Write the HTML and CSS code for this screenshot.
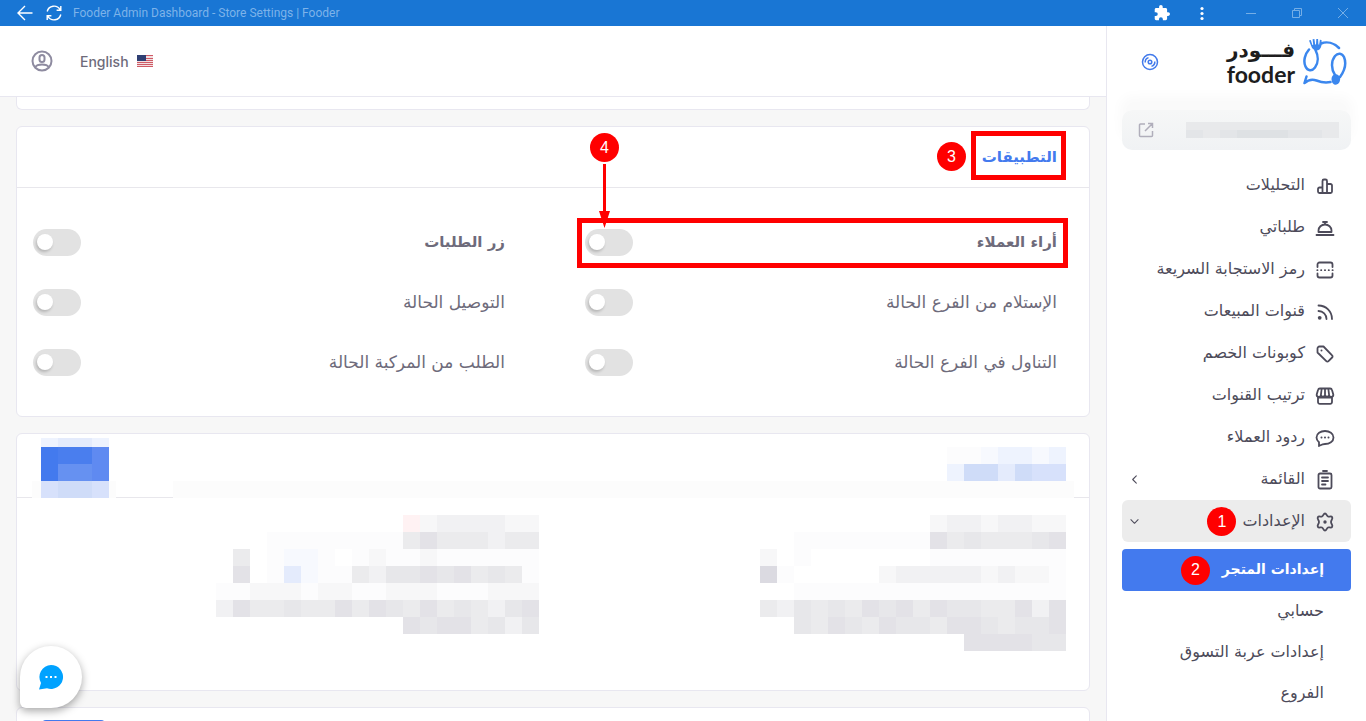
FILE: index.html
```html
<!DOCTYPE html>
<html lang="ar" dir="rtl">
<head>
<meta charset="UTF-8" />
<meta name="viewport" content="width=device-width, initial-scale=1" />
<title>Fooder Admin Dashboard - Store Settings | Fooder</title>
<link rel="stylesheet" href="styles.css">
</head>
<body>

<header class="titlebar" dir="ltr">
  <button class="win-btn" aria-label="Back">
    <svg width="16" height="16" viewBox="0 0 16 16"><path d="M15.500 8H1M8 1 1 8l7 7" /></svg>
  </button>
  <button class="win-btn" aria-label="Reload">
    <svg width="16" height="16" viewBox="0 0 16 16"><path d="M1.200 6.500A7 7 0 0 1 14 4.500M14.800 1v4.200h-4.200M14.800 9.500A7 7 0 0 1 2 11.500M1.200 15v-4.200h4.200" /></svg>
  </button>
  <span class="win-title">Fooder Admin Dashboard - Store Settings | Fooder</span>
  <div class="win-controls">
    <button class="win-btn" aria-label="Extensions">
      <svg width="16" height="16" viewBox="1 1 22 22"><path class="solid" d="M20.500 11H19V7c0-1.100-.9-2-2-2h-4V3.500a2.500 2.500 0 0 0-5 0V5H4c-1.100 0-2 .9-2 2v3.800h1.500a2.700 2.700 0 0 1 0 5.400H2V20c0 1.100.9 2 2 2h3.800v-1.500a2.700 2.700 0 0 1 5.400 0V22H17c1.100 0 2-.9 2-2v-4h1.500a2.500 2.500 0 0 0 0-5z" /></svg>
    </button>
    <button class="win-btn" aria-label="Menu">
      <svg width="16" height="16" viewBox="0 0 16 16"><circle class="solid" cx="8" cy="3.500" r="1.600" /><circle class="solid" cx="8" cy="8.500" r="1.600" /><circle class="solid" cx="8" cy="13.500" r="1.600" /></svg>
    </button>
    <button class="win-btn faint" aria-label="Minimize">
      <svg width="12" height="12" viewBox="0 0 12 12"><path d="M1 6.500h10" /></svg>
    </button>
    <button class="win-btn faint" aria-label="Restore">
      <svg width="12" height="12" viewBox="0 0 12 12"><path d="M1.500 3.500h7v7h-7zM3.500 3.500v-2h7v7h-2" /></svg>
    </button>
    <button class="win-btn faint" aria-label="Close">
      <svg width="12" height="12" viewBox="0 0 12 12"><path d="m1 1 10 10M11 1 1 11" /></svg>
    </button>
  </div>
</header>

<div class="app">

  <aside class="sidebar">
    <div class="brand">
      <svg class="brand-mark" width="46" height="48" viewBox="0 0 46 48">
        <path d="M19 5.500c6-2.500 13-.5 18 4.500M13.500 12c3 6 3 13-.5 17.500-3 4-7.500 3.500-9.500-1C1 23 3 16 7 11.500M33 37c-4-6-4-14 0-19 3-3.500 7-3 9 1 2.500 6 1 13-4 20M4.500 38.500 2.500 45c4-3.500 8-4 12-2.500 5 2 9 2.500 14 1.500" />
        <path class="fill" d="m7 2.500 1.800-.5 1.600 5 .8-.2L10.600 1.200l1.800-.2.8 5.600h.8l.3-5.600 1.800.1.300 5.400.8-.1.700-4.600 1.600.3c.5 4.500 0 7.500-2 9.400-3 2.500-7 .5-8.300-3.500zM29.500 41c0-3.500 3-5.500 5.500-4.500 3 1 4 4.500 2.500 7.500s-5 3.500-6.500 1.500c-1-1-1.500-2.700-1.500-4.500z" />
      </svg>
      <div class="brand-name">
        <span class="brand-ar">فـــودر</span>
        <span class="brand-en">fooder</span>
      </div>
      <button class="icon-btn" aria-label="تثبيت القائمة">
        <svg class="disc" width="18" height="18" viewBox="0 0 18 18"><circle cx="9" cy="9" r="7.500" /><circle cx="9" cy="9" r="1.800" /><path d="M4.200 9.500A4.800 4.800 0 0 1 7.500 4.600M13.800 8.500a4.800 4.800 0 0 1-3.300 4.900" /></svg>
      </button>
    </div>

    <div class="store-link">
      <svg class="mosaic" data-mosaic="store" aria-hidden="true"></svg>
      <svg class="external" width="16" height="16" viewBox="0 0 16 16"><path d="M7 2H2.500a1 1 0 0 0-1 1v10.500a1 1 0 0 0 1 1h11a1 1 0 0 0 1-1V9M10 1.500h4.500V6M14.500 1.500 7 9" /></svg>
    </div>

    <nav class="menu">
      <a href="#"><svg viewBox="0 0 20 20"><path d="M7.500 17V5A1.500 1.500 0 0 1 9 3.500h1.500A1.500 1.500 0 0 1 12 5v12M7.500 11.500h-3A1.500 1.500 0 0 0 3 13v2.500A1.500 1.500 0 0 0 4.500 17h11a1.500 1.500 0 0 0 1.500-1.500V9.500A1.500 1.500 0 0 0 15.500 8H12" /></svg><span>التحليلات</span></a>
      <a href="#"><svg viewBox="0 0 20 20"><path d="M3.500 14v-1.500a6.500 6 0 0 1 13 0V14zM1.500 17h17M10 6.500V4M8 4h4" /></svg><span>طلباتي</span></a>
      <a href="#"><svg viewBox="0 0 20 20"><path d="M2.500 7V4.500a2 2 0 0 1 2-2h11a2 2 0 0 1 2 2V7M2.500 13.500v2a2 2 0 0 0 2 2h11a2 2 0 0 0 2-2v-2M2.300 10.200h.2M6.100 10.200h.2M9.900 10.200h.2M13.700 10.200h.2M17.500 10.200h.2" /></svg><span>رمز الاستجابة السريعة</span></a>
      <a href="#"><svg viewBox="0 0 20 20"><path d="M3.500 3.500c7.500 0 13.500 6 13.500 13.500M3.500 9c4.500 0 8 3.500 8 8" /><circle class="dot" cx="4.700" cy="15.800" r="1.900" /></svg><span>قنوات المبيعات</span></a>
      <a href="#"><svg viewBox="0 0 20 20"><path d="M2.500 4.500v4l8.800 8.600a1.500 1.500 0 0 0 2.200 0l3.600-3.600a1.500 1.500 0 0 0 0-2.200L8.500 2.500h-4a2 2 0 0 0-2 2z" /><circle class="dot" cx="6.500" cy="6.500" r="1" /></svg><span>كوبونات الخصم</span></a>
      <a href="#"><svg viewBox="0 0 20 20"><path d="M5 2.500h10a2 2 0 0 1 2 1.500l1.300 4.500a2.100 2.100 0 0 1-4.200.5 2.100 2.100 0 0 1-4.100 0 2.100 2.100 0 0 1-4.100 0 2.100 2.100 0 0 1-4.200-.5L3 4a2 2 0 0 1 2-1.500zM6.700 2.500 5.900 9M13.300 2.500l.8 6.500M10 2.500V9M3 11.500v4.500a1.800 1.800 0 0 0 1.800 1.800h10.400A1.800 1.800 0 0 0 17 16v-4.500M3 11.500h14" /></svg><span>ترتيب القنوات</span></a>
      <a href="#"><svg viewBox="0 0 20 20"><path d="M4 18v-3.700C2.500 13 1.500 11.500 1.500 9.500c0-4 4-6.500 8.500-6.500s8.500 2.500 8.500 6.500-4 6.500-8.500 6.500c-2.500 0-4 1-6 2z" /><path d="M6.400 9.500h.2M9.900 9.500h.2M13.400 9.500h.2" /></svg><span>ردود العملاء</span></a>
      <a href="#"><svg viewBox="0 0 20 20"><rect x="3.500" y="3.500" width="13" height="15" rx="1.500" /><path d="M8 1h4M7 7.500h6M7 11h6M7 14.500h3.500" /></svg><span>القائمة</span><svg class="chevron" viewBox="0 0 10 10"><path d="M7 1 3 5l4 4" /></svg></a>
      <a href="#" class="open"><svg viewBox="0 0 20 20"><path d="M10 1.500c1.600 0 1.500 2.300 3 3 1.500.6 3.200-1 4.200.8.900 1.600-1.200 2.700-1.200 4.700s2.100 3.100 1.200 4.700c-1 1.800-2.700.2-4.200.8-1.500.7-1.400 3-3 3s-1.500-2.300-3-3c-1.500-.6-3.200 1-4.200-.8C1.900 13.100 4 12 4 10S1.900 6.900 2.800 5.300c1-1.800 2.700-.2 4.200-.8 1.500-.7 1.400-3 3-3z" /><circle class="dot" cx="10" cy="10" r="1.700" /></svg><span>الإعدادات</span><b class="step">1</b><svg class="chevron" viewBox="0 0 10 10"><path d="m1 3 4 4 4-4" /></svg></a>
    </nav>
    <nav class="submenu">
      <a href="#" class="active"><span>إعدادات المتجر</span><b class="step">2</b></a>
      <a href="#"><span>حسابي</span></a>
      <a href="#"><span>إعدادات عربة التسوق</span></a>
      <a href="#"><span>الفروع</span></a>
    </nav>
  </aside>

  <main class="main">
    <div class="topbar" dir="ltr">
      <button class="icon-btn" aria-label="Account">
        <svg class="user" width="22" height="22" viewBox="0 0 22 22"><circle cx="11" cy="11" r="9.500" /><rect x="8.500" y="5" width="5" height="7" rx="2.500" /><path d="M4.500 17c1-2 3.500-2.500 6.500-2.500s5.500.5 6.500 2.500" /></svg>
      </button>
      <a href="#" class="lang">English
        <svg width="16" height="12" viewBox="0 0 16 12"><path fill="#f3dfe1" d="M0 0h16v12H0z" /><path stroke="#cf5b66" d="M0 .5h16M0 3.500h16M0 5.500h16M0 7.500h16M0 9.500h16M0 11.500h16" /><path fill="#2f3f73" d="M0 0h9v6H0z" /></svg>
      </a>
    </div>

    <div class="content">
      <section class="card card-tail"></section>

      <section class="card">
        <div class="card-head">
          <h2>التطبيقات</h2>
        </div>
        <div class="switches">
          <div class="switch-row strong marked">
            <label for="reviews">أراء العملاء</label>
            <input type="checkbox" id="reviews" class="switch" />
            <div class="pointer"><b class="step">4</b><svg width="11" height="66" viewBox="0 0 11 66"><path d="M4 2h3v47h4L5.500 66 0 49h4z" /></svg></div>
          </div>
          <div class="switch-row strong">
            <label for="orderButton">زر الطلبات</label>
            <input type="checkbox" id="orderButton" class="switch" />
          </div>
          <div class="switch-row">
            <label for="pickup">الإستلام من الفرع الحالة</label>
            <input type="checkbox" id="pickup" class="switch" />
          </div>
          <div class="switch-row">
            <label for="delivery">التوصيل الحالة</label>
            <input type="checkbox" id="delivery" class="switch" />
          </div>
          <div class="switch-row">
            <label for="dineIn">التناول في الفرع الحالة</label>
            <input type="checkbox" id="dineIn" class="switch" />
          </div>
          <div class="switch-row">
            <label for="carOrder">الطلب من المركبة الحالة</label>
            <input type="checkbox" id="carOrder" class="switch" />
          </div>
        </div>
        <div class="title-mark"><b class="step">3</b></div>
      </section>

      <section class="card">
        <div class="card-head hidden-head">
          <svg class="mosaic" data-mosaic="title" aria-hidden="true"></svg>
          <svg class="mosaic" data-mosaic="button" aria-hidden="true"></svg>
        </div>
        <div class="hidden-body">
          <svg class="mosaic" data-mosaic="right" aria-hidden="true"></svg>
          <svg class="mosaic" data-mosaic="left" aria-hidden="true"></svg>
        </div>
      </section>

      <section class="card next-card">
        <button class="save" aria-label="حفظ"></button>
      </section>
    </div>
  </main>
</div>

<button class="chat" aria-label="Chat">
  <svg width="26" height="26" viewBox="0 0 26 26"><path fill="#00a2ff" d="M13 1a12 12 0 1 1-4 23.300L1 25.500 3 19A12 12 0 0 1 13 1z" /><path fill="#fff" d="M7.500 12h2v2h-2zM12 12h2v2h-2zM16.500 12h2v2h-2z" /></svg>
</button>

<script>
// each letter is one cell of a censored block, "." stays empty
const palette = {
  a: '#fcfcfd', b: '#f7f7f8', c: '#f1f1f3', d: '#ebebed', e: '#e7e7ea', f: '#e3e2e7', g: '#dbdae1',
  p: '#fff2f3', q: '#f7f9fe', r: '#e4ebfc',
  t: '#eef3fe', u: '#d7e1fb', v: '#cfdcf8',
  B: '#437aee', C: '#4a7eee', D: '#5f8af1', E: '#6691f1',
  m: '#e8e9eb', n: '#e3e5e8', o: '#dee1e4'
};

const mosaics = {
  store: { w: 17, h: 8, rows: ['mmmmmmmmm', 'nmnooonnm'] },
  title: { w: 17, h: 17, rows: ['aaqttqt', 'tvvrvuu'] },
  button: { w: 17, h: 17, crop: 8, rows: ['trrt', 'BCCD', 'BEED', 'uvvu'] },
  right: { w: 17, h: 17, rows: [
    '..........bccbccbb',
    '..aaaaaaaafdedddef',
    'b.a.......aaaaaaaa',
    'ga.....bcccccbcbba',
    '..aaaaaaaaaaaaaaaa',
    'dcededfefdfeeddfcf',
    '..edfedfeedffedeef',
    '............ffffee'
  ] },
  left: { w: 17, h: 17, rows: [
    '...........pbccccbb',
    '...aaaaaaaadfdddcdd',
    '.d.aqqa.abaabaaaaaa',
    '.f.arqaadceefefdeda',
    'aabbbabbaabbbaaabbb',
    'cfddeddfdfedfdedcef',
    '...........feffdece'
  ] }
};

document.querySelectorAll('[data-mosaic]').forEach(svg => {
  const { w, h, rows, crop = 0 } = mosaics[svg.dataset.mosaic];
  const width = rows[0].length * w;
  const height = rows.length * h - crop;
  svg.setAttribute('width', width);
  svg.setAttribute('height', height);
  svg.setAttribute('viewBox', `0 ${crop} ${width} ${height}`);
  svg.innerHTML = rows
    .map((row, y) => [...row]
      .map((c, x) => c === '.' ? '' : `<rect x="${x * w}" y="${y * h}" width="${w}" height="${h}" fill="${palette[c]}" />`)
      .join(''))
    .join('');
});
</script>
</body>
</html>
```
FILE: styles.css
```css
* {
  box-sizing: border-box;
}
body {
  margin: 0;
  height: 100vh;
  overflow: hidden;
  display: flex;
  flex-direction: column;
  background: #f7f7f7;
  color: #4d4b5a;
  font-family: "DejaVu Sans", sans-serif;
  font-size: 16px;
}
a {
  color: inherit;
  text-decoration: none;
}
button {
  padding: 0;
  border: none;
  background: none;
  cursor: pointer;
}
svg {
  display: block;
  flex-shrink: 0;
  fill: none;
}

/* window title bar */
.titlebar {
  display: flex;
  align-items: center;
  gap: 13px;
  height: 26px;
  flex-shrink: 0;
  padding: 0 17px;
  background: #1976d4;
  font-family: Roboto, sans-serif;
  font-size: 12px;
}
.win-title {
  color: #7db3e9;
  margin-left: -2px;
}
.win-btn svg {
  stroke: #fff;
  stroke-width: 1.4;
}
.win-btn .solid {
  fill: #fff;
  stroke: none;
}
.win-controls {
  display: flex;
  align-items: center;
  margin-left: auto;
  gap: 34px;
}
.win-controls .win-btn:nth-child(2) {
  margin: 0 1px 0 -10px;
}
.win-btn.faint svg {
  stroke: #75aee6;
  stroke-width: 1;
}

.app {
  flex: 1;
  min-height: 0;
  display: flex;
}

/* sidebar */
.sidebar {
  width: 260px;
  flex-shrink: 0;
  overflow: hidden;
  padding: 0 15px;
  background: #fff;
  border-left: 1px solid #e8e7f0;
}
.brand {
  display: flex;
  align-items: center;
  gap: 7px;
  height: 72px;
  padding: 0 3px 0 19px;
}
.brand-mark {
  stroke: #3b87ee;
  stroke-width: 2.5;
  stroke-linecap: round;
  stroke-linejoin: round;
}
.brand-mark .fill {
  fill: #3b87ee;
  stroke: none;
}
.brand-name {
  display: flex;
  flex-direction: column;
  color: #1d1d1d;
  font-weight: 700;
}
.brand-ar {
  font-size: 20px;
  line-height: 24px;
}
.brand-en {
  font-family: Lato, sans-serif;
  font-size: 23px;
  line-height: 24px;
}
.brand .icon-btn {
  margin-right: auto;
}
.disc {
  stroke: #427aeb;
  stroke-width: 1.5;
}
.store-link {
  display: flex;
  align-items: center;
  justify-content: space-between;
  height: 40px;
  margin: 12px 0 14px;
  padding: 0 12px 0 16px;
  border-radius: 10px;
  background: linear-gradient(#f6f7f7, #f0f2f4);
  box-shadow: 0 -12px 12px 2px #fafafa;
}
.external {
  stroke: #b0aebb;
  stroke-width: 1.5;
}
.menu a,
.submenu a {
  display: flex;
  align-items: center;
  border-radius: 6px;
}
.menu span,
.submenu span {
  padding-bottom: 2px;
}
.menu a {
  gap: 10px;
  height: 42px;
  padding: 1px 16px 0 8px;
}
.menu svg {
  width: 20px;
  height: 20px;
  stroke: #4d4b5a;
  stroke-width: 1.8;
  stroke-linecap: round;
  stroke-linejoin: round;
}
.menu .dot {
  fill: #4d4b5a;
  stroke: none;
}
.menu .chevron {
  width: 9px;
  height: 9px;
  margin-right: auto;
  stroke-width: 1.2;
}
.menu .open {
  background: #ececec;
}
.menu .step {
  margin-right: -4px;
}
.submenu {
  margin-top: 7px;
}
.submenu a {
  height: 41px;
  padding: 0 27px;
  gap: 12px;
}
.submenu .active {
  height: 42px;
  border-radius: 4px;
  background: #437aee;
  color: #fff;
  font-size: 14px;
  font-weight: 700;
}

/* numbered guide marks */
.step {
  display: flex;
  align-items: center;
  justify-content: center;
  width: 29px;
  height: 29px;
  flex-shrink: 0;
  border-radius: 50%;
  background: #f00;
  color: #fff;
  font: 16px "Liberation Sans", sans-serif;
}

/* main */
.main {
  flex: 1;
  min-width: 0;
  overflow: hidden;
}
.topbar {
  display: flex;
  align-items: center;
  gap: 27px;
  height: 71px;
  padding: 0 31px;
  background: #fff;
  border-bottom: 1px solid #e8e7f0;
}
.user {
  stroke: #8e8ba0;
  stroke-width: 2;
}
.lang {
  display: flex;
  align-items: center;
  gap: 8px;
  color: #6e6b7b;
  font-family: Inter, sans-serif;
  font-size: 14px;
  font-weight: 500;
}
.content {
  display: flex;
  flex-direction: column;
  gap: 16px;
  padding: 0 16px;
}
.card {
  position: relative;
  background: #fff;
  border: 1px solid #e8e7f0;
  border-radius: 6px;
}
.card-tail {
  height: 13px;
  border-top: none;
  border-radius: 0 0 6px 6px;
}
.card-head {
  display: flex;
  align-items: center;
  height: 61px;
  padding: 0 32px;
  border-bottom: 1px solid #e8e7ec;
}
.card-head h2 {
  margin: 0;
  color: #437aee;
  font-size: 15px;
}
.switches {
  display: grid;
  grid-template-columns: 1fr 1fr;
  grid-auto-rows: 60px;
  column-gap: 80px;
  padding: 24px 32px 24px 16px;
}
.switch-row {
  position: relative;
  display: flex;
  align-items: center;
  justify-content: space-between;
  color: #6e6b7b;
  font-size: 17px;
}
.switch-row.strong {
  font-size: 15px;
  font-weight: 700;
}
.switch {
  appearance: none;
  display: flex;
  align-items: center;
  width: 48px;
  height: 27px;
  margin: 0;
  padding: 0 4px;
  border-radius: 14px;
  background: #e2e2e2;
  direction: ltr;
  cursor: pointer;
}
.switch::before {
  content: "";
  width: 16px;
  height: 16px;
  border-radius: 50%;
  background: #fff;
  box-shadow: -1px 2px 3px rgb(0 0 0 / 0.2);
}
.switch:checked {
  background: #437aee;
  justify-content: flex-end;
}
.marked::after {
  content: "";
  position: absolute;
  inset: 6px -11px 4px -8px;
  border: 5px solid #f00;
  pointer-events: none;
}
.pointer {
  position: absolute;
  left: 5px;
  bottom: 44px;
  z-index: 1;
  display: flex;
  flex-direction: column;
  align-items: center;
  pointer-events: none;
}
.pointer svg {
  fill: #f00;
}
.title-mark {
  position: absolute;
  top: 4px;
  right: 23px;
  width: 95px;
  height: 49px;
  border: 5px solid #f00;
}
.title-mark .step {
  position: absolute;
  top: 6px;
  right: 95px;
}

/* censored card */
.hidden-head {
  position: relative;
  align-items: flex-end;
  justify-content: space-between;
  height: 64px;
  padding: 0 23px 0 24px;
}
.hidden-head::before,
.hidden-head::after {
  content: "";
  position: absolute;
  bottom: -1px;
  height: 17px;
  background: #fcfcfc;
}
.hidden-head::before {
  left: 156px;
  right: 15px;
}
.hidden-head::after {
  left: 15px;
  width: 84px;
}
.hidden-head .mosaic {
  z-index: 1;
}
.hidden-head .mosaic:first-child {
  margin-bottom: 16px;
}
.hidden-head .mosaic:last-child {
  margin-bottom: -1px;
}
.hidden-body {
  display: flex;
  justify-content: space-between;
  align-items: flex-start;
  padding: 17px 23px 39px 199px;
}
.next-card {
  height: 80px;
  padding: 12px 25px;
  display: flex;
  flex-direction: row-reverse;
}
.save {
  width: 63px;
  height: 38px;
  border-radius: 4px;
  background: #437aee;
}

.chat {
  position: fixed;
  left: 20px;
  bottom: 13px;
  display: flex;
  align-items: center;
  justify-content: center;
  width: 62px;
  height: 62px;
  border-radius: 31px 31px 31px 6px;
  background: #fff;
  box-shadow: 0 3px 8px rgb(0 0 0 / 0.35);
}
```
